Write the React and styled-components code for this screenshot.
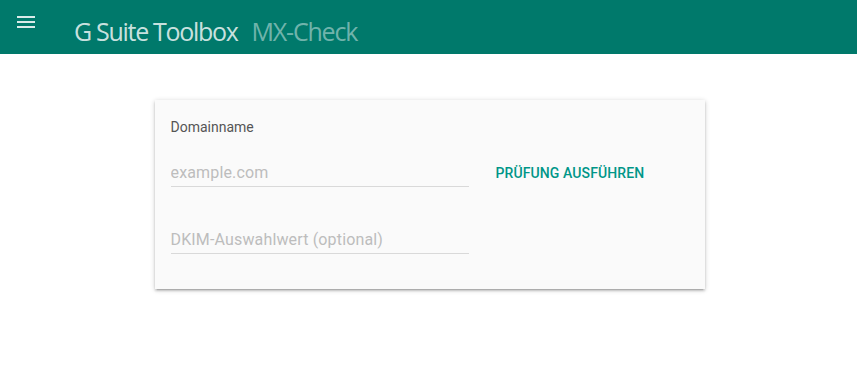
import styled, { createGlobalStyle } from "styled-components";

const GlobalStyle = createGlobalStyle`
  html, body {
    margin: 0;
    padding: 0;
    background: #ffffff;
    font-family: Roboto, "Liberation Sans", sans-serif;
  }
`;

const Page = styled.div`
  width: 100%;
  min-height: 384px;
  background: #ffffff;
`;

const Toolbar = styled.header`
  height: 54px;
  background: #00796b;
  display: flex;
  align-items: center;
  padding: 0 17px;
  box-sizing: border-box;
`;

const MenuButton = styled.button`
  border: none;
  background: none;
  padding: 0;
  margin: -10px 39px 0 0;
  width: 18px;
  height: 18px;
  display: flex;
  align-items: center;
  justify-content: center;
  color: rgba(255, 255, 255, 0.85);
`;

const Title = styled.h1`
  margin: 8px 0 0;
  font-family: "Open Sans", "Liberation Sans", sans-serif;
  font-weight: 400;
  font-size: 25px;
  letter-spacing: -1.3px;
  color: rgba(255, 255, 255, 0.8);
  display: flex;
  align-items: baseline;
  gap: 14px;
`;

const SubTitle = styled.span`
  color: rgba(255, 255, 255, 0.45);
  letter-spacing: -1.2px;
`;

const Main = styled.main`
  display: flex;
  justify-content: center;
  padding: 46px 0 0 2px;
`;

const Card = styled.section`
  width: 550px;
  background: #fafafa;
  box-shadow: 0 2px 2px rgba(0, 0, 0, 0.14), 0 3px 1px -2px rgba(0, 0, 0, 0.12),
    0 1px 5px rgba(0, 0, 0, 0.2);
  padding: 19px 16px 35px;
  box-sizing: border-box;
`;

const Label = styled.div`
  font-size: 14px;
  color: #555;
  line-height: 16px;
`;

const Row = styled.div`
  display: flex;
  align-items: flex-end;
  gap: 27px;
  margin-top: ${(p) => p.$gap}px;
`;

const Input = styled.input`
  width: 298px;
  border: none;
  border-bottom: 1px solid #d9d9d9;
  background: transparent;
  font-family: Roboto, "Liberation Sans", sans-serif;
  font-size: 16px;
  letter-spacing: 0.15px;
  padding: 0 0 4px;
  color: #333;
  outline: none;
  &::placeholder {
    color: #bdbdbd;
  }
`;

const ActionButton = styled.button`
  border: none;
  background: none;
  padding: 0;
  font-family: Roboto, "Liberation Sans", sans-serif;
  font-weight: 500;
  font-size: 14px;
  color: #009688;
  letter-spacing: 0.1px;
  margin-bottom: 6px;
  cursor: pointer;
`;

function App() {
  return (
    <Page>
      <GlobalStyle />
      <Toolbar>
        <MenuButton aria-label="Menü">
          <svg width="18" height="12" viewBox="0 0 18 12">
            <rect x="0" y="0" width="18" height="2" fill="currentColor" />
            <rect x="0" y="5" width="18" height="2" fill="currentColor" />
            <rect x="0" y="10" width="18" height="2" fill="currentColor" />
          </svg>
        </MenuButton>
        <Title>
          G Suite Toolbox <SubTitle>MX-Check</SubTitle>
        </Title>
      </Toolbar>
      <Main>
        <Card>
          <Label>Domainname</Label>
          <Row $gap={28}>
            <Input placeholder="example.com" />
            <ActionButton>PRÜFUNG AUSFÜHREN</ActionButton>
          </Row>
          <Row $gap={43}>
            <Input placeholder="DKIM-Auswahlwert (optional)" />
          </Row>
        </Card>
      </Main>
    </Page>
  );
}

export default App;
